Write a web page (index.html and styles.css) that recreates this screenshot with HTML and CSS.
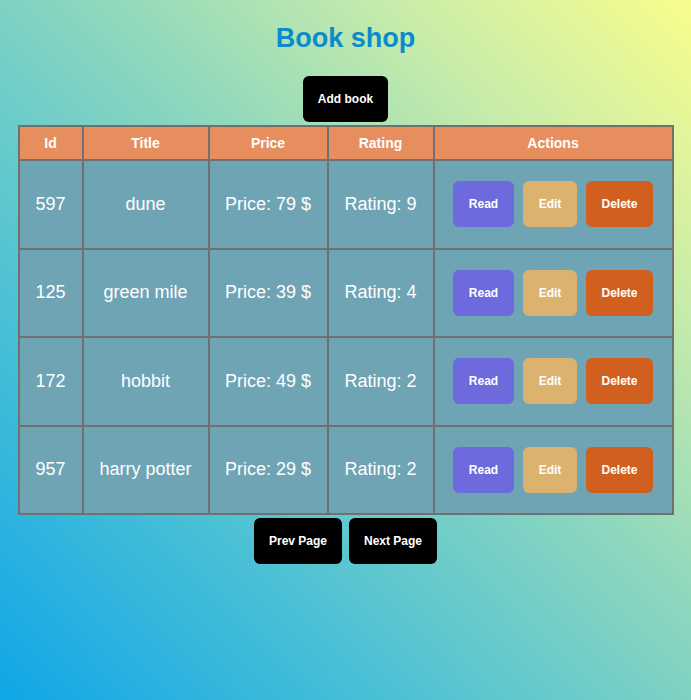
FILE: index.html
```html
<!DOCTYPE html>
<html>
<head>
<meta charset="utf-8">
<link rel="stylesheet" href="styles.css">
</head>
<body>
<div class="page">
  <h1 class="title">Book shop</h1>
  <button class="btn btn-dark">Add book</button>
  <table class="books">
    <thead>
      <tr><th class="c-id">Id</th><th class="c-title">Title</th><th class="c-price">Price</th><th class="c-rating">Rating</th><th class="c-actions">Actions</th></tr>
    </thead>
    <tbody>
      <tr><td>597</td><td>dune</td><td>Price: 79 $</td><td>Rating: 9</td><td><div class="actions"><button class="btn btn-read">Read</button><button class="btn btn-edit">Edit</button><button class="btn btn-delete">Delete</button></div></td></tr>
      <tr><td>125</td><td>green mile</td><td>Price: 39 $</td><td>Rating: 4</td><td><div class="actions"><button class="btn btn-read">Read</button><button class="btn btn-edit">Edit</button><button class="btn btn-delete">Delete</button></div></td></tr>
      <tr><td>172</td><td>hobbit</td><td>Price: 49 $</td><td>Rating: 2</td><td><div class="actions"><button class="btn btn-read">Read</button><button class="btn btn-edit">Edit</button><button class="btn btn-delete">Delete</button></div></td></tr>
      <tr><td>957</td><td>harry potter</td><td>Price: 29 $</td><td>Rating: 2</td><td><div class="actions"><button class="btn btn-read">Read</button><button class="btn btn-edit">Edit</button><button class="btn btn-delete">Delete</button></div></td></tr>
    </tbody>
  </table>
  <div class="pager">
    <button class="btn btn-dark btn-page">Prev Page</button>
    <button class="btn btn-dark btn-page">Next Page</button>
  </div>
</div>
</body>
</html>
```
FILE: styles.css
```css
html, body {
  margin: 0;
  padding: 0;
  min-height: 100vh;
}
body {
  background: linear-gradient(to top right, #10a6e8 0%, #4fc2d4 30%, #8ad6bf 55%, #c8ecaa 78%, #f9fd8c 100%);
  font-family: "Liberation Sans", Arial, sans-serif;
}
.page {
  display: flex;
  flex-direction: column;
  align-items: center;
  padding-top: 22px;
}
.title {
  margin: 0 0 22px 0;
  font-size: 27px;
  line-height: 32px;
  font-weight: bold;
  color: #0b8bcd;
}
.btn {
  border: none;
  border-radius: 6px;
  font-family: "Liberation Sans", Arial, sans-serif;
  font-size: 12px;
  font-weight: bold;
  color: #ffffff;
  height: 46px;
  padding: 0 15px;
  cursor: pointer;
}
.btn-dark {
  background: #000000;
  width: 85px;
  padding: 0;
}
.books {
  margin-top: 3px;
  border-collapse: collapse;
  width: 656px;
  border: 2px solid #707070;
}
.books th, .books td {
  border: 2px solid #707070;
  text-align: center;
  color: #ffffff;
}
.books th {
  background: #e68e5d;
  height: 32px;
  font-size: 14px;
  font-weight: bold;
  padding: 0;
}
.books td {
  background: #6fa4b5;
  height: 86.5px;
  font-size: 18px;
  padding: 0;
}
.c-id { width: 62px; }
.c-title { width: 124px; }
.c-price { width: 117px; }
.c-rating { width: 104px; }
.actions {
  display: flex;
  justify-content: center;
  gap: 9px;
}
.btn-read { background: #6d6ade; width: 61px; padding: 0; }
.btn-edit { background: #dcb26f; width: 54px; padding: 0; }
.btn-delete { background: #d1601f; width: 67px; padding: 0; }
.pager {
  margin-top: 3px;
  display: flex;
  gap: 7px;
}
.btn-page { width: 88px; }
```
